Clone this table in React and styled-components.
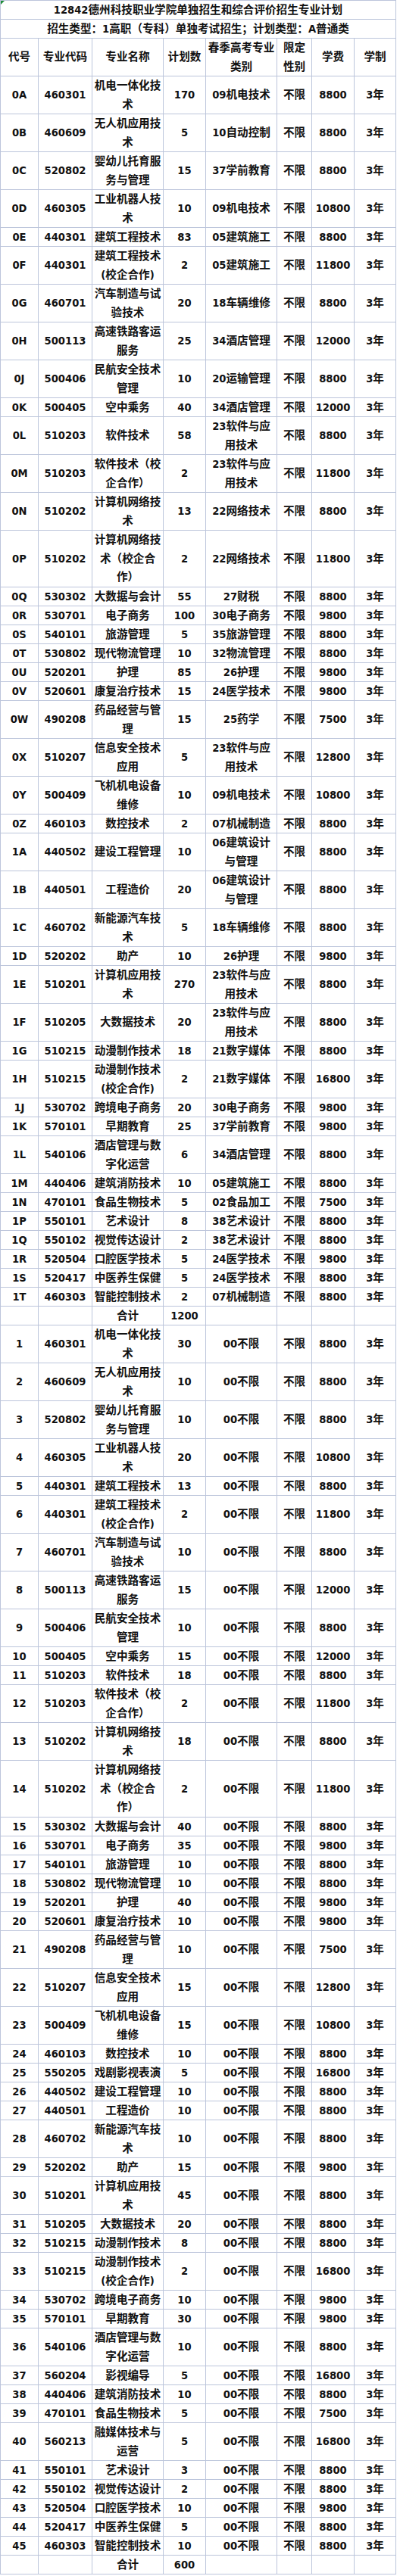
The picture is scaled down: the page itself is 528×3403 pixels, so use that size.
import React from "react";
import styled, { createGlobalStyle } from "styled-components";

const Global = createGlobalStyle`
  html, body { margin: 0; padding: 0; background: #ffffff; }
  body {
    font-family: "DejaVu Sans Condensed", "DejaVu Sans", "Noto Sans CJK SC", sans-serif;
  }
`;

const Sheet = styled.div`
  position: relative;
  width: max-content;
`;

const Corner = styled.div`
  position: absolute;
  left: 1px;
  top: 1px;
  width: 0;
  height: 0;
  border-top: 5px solid #1e8c3a;
  border-right: 5px solid transparent;
`;

const Grid = styled.div`
  display: grid;
  grid-template-columns: 49px 70px 93px 55px 93px 45px 55px 54px;
  gap: 1px;
  padding: 1px;
  background: #bcc5db;
  font-size: 14.6px;
  font-weight: bold;
  color: #111111;
`;

const Cell = styled.div`
  background: #ffffff;
  height: ${(p) => p.$lines * 25 - 1}px;
  display: flex;
  flex-direction: column;
  align-items: center;
  justify-content: center;
  text-align: center;
  white-space: nowrap;
  overflow: hidden;
  line-height: 24.4px;
`;

const Banner = styled(Cell)`
  grid-column: 1 / -1;
`;

const Line = styled.span`
  display: block;
`;

const partA = [
  ["0A", "460301", "机电一体化技|术", "170", "09机电技术", "8800"],
  ["0B", "460609", "无人机应用技|术", "5", "10自动控制", "8800"],
  ["0C", "520802", "婴幼儿托育服|务与管理", "15", "37学前教育", "8800"],
  ["0D", "460305", "工业机器人技|术", "10", "09机电技术", "10800"],
  ["0E", "440301", "建筑工程技术", "83", "05建筑施工", "8800"],
  ["0F", "440301", "建筑工程技术|(校企合作)", "2", "05建筑施工", "11800"],
  ["0G", "460701", "汽车制造与试|验技术", "20", "18车辆维修", "8800"],
  ["0H", "500113", "高速铁路客运|服务", "25", "34酒店管理", "12000"],
  ["0J", "500406", "民航安全技术|管理", "10", "20运输管理", "8800"],
  ["0K", "500405", "空中乘务", "40", "34酒店管理", "12000"],
  ["0L", "510203", "软件技术", "58", "23软件与应|用技术", "8800"],
  ["0M", "510203", "软件技术（校|企合作）", "2", "23软件与应|用技术", "11800"],
  ["0N", "510202", "计算机网络技|术", "13", "22网络技术", "8800"],
  ["0P", "510202", "计算机网络技|术（校企合|作）", "2", "22网络技术", "11800"],
  ["0Q", "530302", "大数据与会计", "55", "27财税", "8800"],
  ["0R", "530701", "电子商务", "100", "30电子商务", "9800"],
  ["0S", "540101", "旅游管理", "5", "35旅游管理", "8800"],
  ["0T", "530802", "现代物流管理", "10", "32物流管理", "8800"],
  ["0U", "520201", "护理", "85", "26护理", "9800"],
  ["0V", "520601", "康复治疗技术", "15", "24医学技术", "9800"],
  ["0W", "490208", "药品经营与管|理", "15", "25药学", "7500"],
  ["0X", "510207", "信息安全技术|应用", "5", "23软件与应|用技术", "12800"],
  ["0Y", "500409", "飞机机电设备|维修", "10", "09机电技术", "10800"],
  ["0Z", "460103", "数控技术", "2", "07机械制造", "8800"],
  ["1A", "440502", "建设工程管理", "10", "06建筑设计|与管理", "8800"],
  ["1B", "440501", "工程造价", "20", "06建筑设计|与管理", "8800"],
  ["1C", "460702", "新能源汽车技|术", "5", "18车辆维修", "8800"],
  ["1D", "520202", "助产", "10", "26护理", "9800"],
  ["1E", "510201", "计算机应用技|术", "270", "23软件与应|用技术", "8800"],
  ["1F", "510205", "大数据技术", "20", "23软件与应|用技术", "8800"],
  ["1G", "510215", "动漫制作技术", "18", "21数字媒体", "8800"],
  ["1H", "510215", "动漫制作技术|(校企合作)", "2", "21数字媒体", "16800"],
  ["1J", "530702", "跨境电子商务", "20", "30电子商务", "9800"],
  ["1K", "570101", "早期教育", "25", "37学前教育", "9800"],
  ["1L", "540106", "酒店管理与数|字化运营", "6", "34酒店管理", "8800"],
  ["1M", "440406", "建筑消防技术", "10", "05建筑施工", "8800"],
  ["1N", "470101", "食品生物技术", "5", "02食品加工", "7500"],
  ["1P", "550101", "艺术设计", "8", "38艺术设计", "8800"],
  ["1Q", "550102", "视觉传达设计", "2", "38艺术设计", "8800"],
  ["1R", "520504", "口腔医学技术", "5", "24医学技术", "9800"],
  ["1S", "520417", "中医养生保健", "5", "24医学技术", "8800"],
  ["1T", "460303", "智能控制技术", "2", "07机械制造", "8800"],
];

const partB = [
  ["1", "460301", "机电一体化技|术", "30", "8800"],
  ["2", "460609", "无人机应用技|术", "10", "8800"],
  ["3", "520802", "婴幼儿托育服|务与管理", "10", "8800"],
  ["4", "460305", "工业机器人技|术", "20", "10800"],
  ["5", "440301", "建筑工程技术", "13", "8800"],
  ["6", "440301", "建筑工程技术|(校企合作)", "2", "11800"],
  ["7", "460701", "汽车制造与试|验技术", "10", "8800"],
  ["8", "500113", "高速铁路客运|服务", "15", "12000"],
  ["9", "500406", "民航安全技术|管理", "10", "8800"],
  ["10", "500405", "空中乘务", "15", "12000"],
  ["11", "510203", "软件技术", "18", "8800"],
  ["12", "510203", "软件技术（校|企合作）", "2", "11800"],
  ["13", "510202", "计算机网络技|术", "18", "8800"],
  ["14", "510202", "计算机网络技|术（校企合|作）", "2", "11800"],
  ["15", "530302", "大数据与会计", "40", "8800"],
  ["16", "530701", "电子商务", "35", "9800"],
  ["17", "540101", "旅游管理", "10", "8800"],
  ["18", "530802", "现代物流管理", "10", "8800"],
  ["19", "520201", "护理", "40", "9800"],
  ["20", "520601", "康复治疗技术", "10", "9800"],
  ["21", "490208", "药品经营与管|理", "10", "7500"],
  ["22", "510207", "信息安全技术|应用", "15", "12800"],
  ["23", "500409", "飞机机电设备|维修", "15", "10800"],
  ["24", "460103", "数控技术", "10", "8800"],
  ["25", "550205", "戏剧影视表演", "5", "16800"],
  ["26", "440502", "建设工程管理", "10", "8800"],
  ["27", "440501", "工程造价", "10", "8800"],
  ["28", "460702", "新能源汽车技|术", "10", "8800"],
  ["29", "520202", "助产", "15", "9800"],
  ["30", "510201", "计算机应用技|术", "45", "8800"],
  ["31", "510205", "大数据技术", "20", "8800"],
  ["32", "510215", "动漫制作技术", "8", "8800"],
  ["33", "510215", "动漫制作技术|(校企合作)", "2", "16800"],
  ["34", "530702", "跨境电子商务", "10", "9800"],
  ["35", "570101", "早期教育", "30", "9800"],
  ["36", "540106", "酒店管理与数|字化运营", "10", "8800"],
  ["37", "560204", "影视编导", "5", "16800"],
  ["38", "440406", "建筑消防技术", "10", "8800"],
  ["39", "470101", "食品生物技术", "5", "7500"],
  ["40", "560213", "融媒体技术与|运营", "5", "16800"],
  ["41", "550101", "艺术设计", "3", "8800"],
  ["42", "550102", "视觉传达设计", "2", "8800"],
  ["43", "520504", "口腔医学技术", "10", "9800"],
  ["44", "520417", "中医养生保健", "5", "8800"],
  ["45", "460303", "智能控制技术", "10", "8800"],
];

const rows = [
  ...partA.map(([code, major, name, plan, cat, fee]) => ({
    code, major, name, plan, cat, gender: "不限", fee, years: "3年",
  })),
  { code: "", major: "", name: "合计", plan: "1200", cat: "", gender: "", fee: "", years: "" },
  ...partB.map(([code, major, name, plan, fee]) => ({
    code, major, name, plan, cat: "00不限", gender: "不限", fee, years: "3年",
  })),
  { code: "", major: "", name: "合计", plan: "600", cat: "", gender: "", fee: "", years: "" },
];

const header = ["代号", "专业代码", "专业名称", "计划数", "春季高考专业|类别", "限定|性别", "学费", "学制"];

const split = (t) => t.split("|");

function Text({ value }) {
  return split(value).map((l, i) => <Line key={i}>{l}</Line>);
}

export default function App() {
  const headerLines = Math.max(...header.map((h) => split(h).length));
  return (
    <Sheet>
      <Global />
      <Grid>
        <Banner $lines={1}>12842德州科技职业学院单独招生和综合评价招生专业计划</Banner>
        <Banner $lines={1}>招生类型：1高职（专科）单独考试招生；计划类型：A普通类</Banner>
        {header.map((h, i) => (
          <Cell key={"h" + i} $lines={headerLines}>
            <Text value={h} />
          </Cell>
        ))}
        {rows.map((r, ri) => {
          const cols = [r.code, r.major, r.name, r.plan, r.cat, r.gender, r.fee, r.years];
          const lines = Math.max(...cols.map((c) => split(c).length));
          return cols.map((c, ci) => (
            <Cell key={ri + "-" + ci} $lines={lines}>
              <Text value={c} />
            </Cell>
          ));
        })}
      </Grid>
      <Corner />
    </Sheet>
  );
}
